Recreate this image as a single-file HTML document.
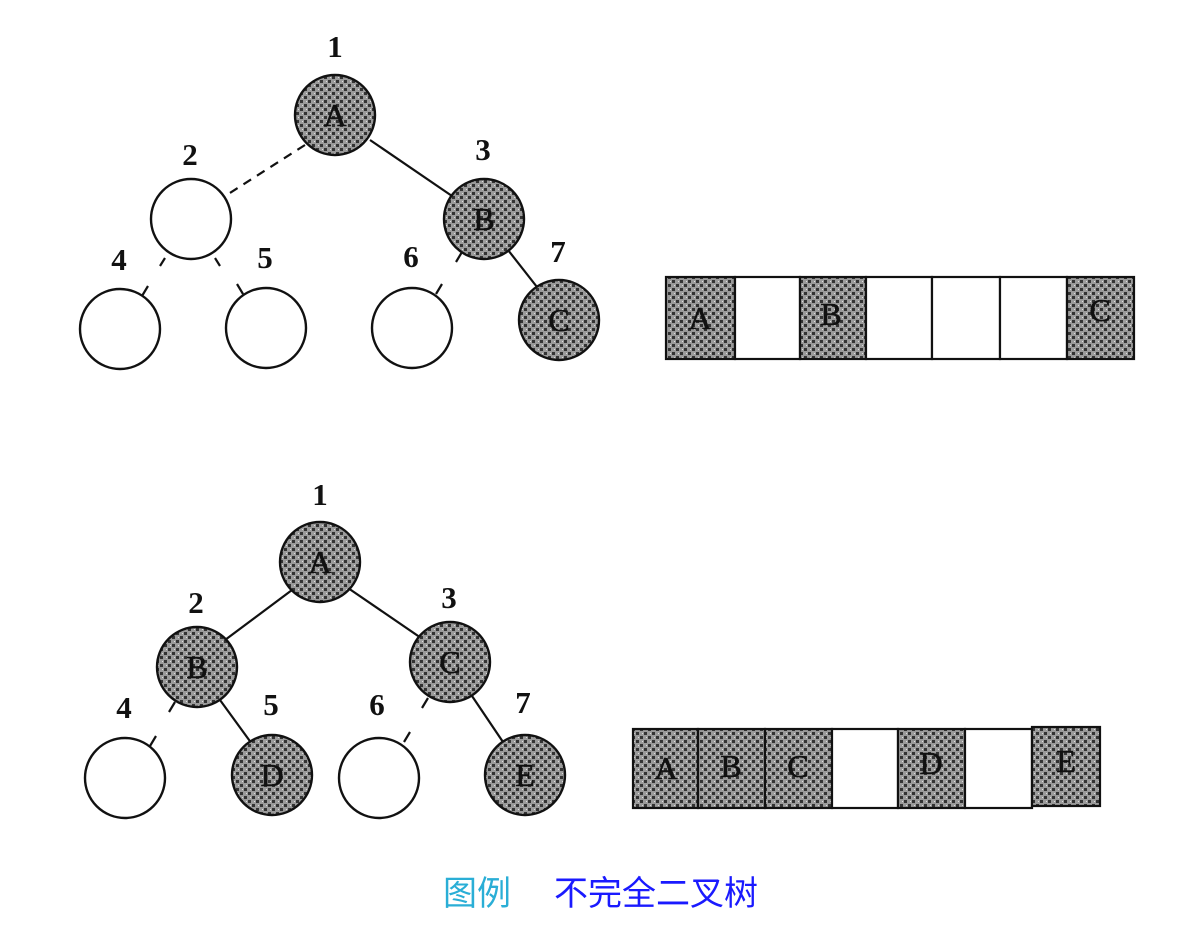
<!DOCTYPE html>
<html><head><meta charset="utf-8">
<style>
html,body{margin:0;padding:0;background:#fff;}
svg{display:block;}
.n{font-family:"Liberation Serif",serif;font-size:31px;font-weight:bold;fill:#111;}
.l{font-family:"Liberation Serif",serif;font-size:32px;fill:#111;text-anchor:middle;stroke:#111;stroke-width:0.6;}
</style></head><body>
<svg width="1198" height="944" viewBox="0 0 1198 944" xmlns="http://www.w3.org/2000/svg">
<defs>
<pattern id="p" width="8" height="8" patternUnits="userSpaceOnUse">
<rect width="8" height="8" fill="#9a9a9a"/>
<rect x="0" y="0" width="3" height="3" fill="#333"/>
<rect x="4" y="4" width="3" height="3" fill="#333"/>
<rect x="2" y="5" width="1" height="1" fill="#ddd"/>
<rect x="6" y="1" width="1" height="1" fill="#ddd"/>
</pattern>
</defs>
<g stroke="#111" stroke-width="2.2" fill="none">
<line x1="305" y1="145" x2="222" y2="198" stroke-dasharray="9,7"/>
<line x1="370" y1="140" x2="452" y2="196"/>
<line x1="165" y1="258" x2="160" y2="266"/>
<line x1="215" y1="258" x2="220" y2="266"/>
<line x1="148" y1="286" x2="142" y2="296"/>
<line x1="237" y1="284" x2="243" y2="294"/>
<line x1="462" y1="252" x2="456" y2="262"/>
<line x1="442" y1="284" x2="436" y2="294"/>
<line x1="508" y1="250" x2="537" y2="287"/>
<line x1="292" y1="590" x2="225" y2="640"/>
<line x1="348" y1="588" x2="424" y2="640"/>
<line x1="175" y1="702" x2="169" y2="712"/>
<line x1="156" y1="736" x2="150" y2="746"/>
<line x1="220" y1="700" x2="252" y2="744"/>
<line x1="428" y1="698" x2="422" y2="708"/>
<line x1="410" y1="732" x2="404" y2="742"/>
<line x1="472" y1="696" x2="503" y2="742"/>
</g>
<g stroke="#111" stroke-width="2.4">
<circle cx="335" cy="115" r="40" fill="url(#p)"/>
<circle cx="191" cy="219" r="40" fill="#fff"/>
<circle cx="484" cy="219" r="40" fill="url(#p)"/>
<circle cx="120" cy="329" r="40" fill="#fff"/>
<circle cx="266" cy="328" r="40" fill="#fff"/>
<circle cx="412" cy="328" r="40" fill="#fff"/>
<circle cx="559" cy="320" r="40" fill="url(#p)"/>
<circle cx="320" cy="562" r="40" fill="url(#p)"/>
<circle cx="197" cy="667" r="40" fill="url(#p)"/>
<circle cx="450" cy="662" r="40" fill="url(#p)"/>
<circle cx="125" cy="778" r="40" fill="#fff"/>
<circle cx="272" cy="775" r="40" fill="url(#p)"/>
<circle cx="379" cy="778" r="40" fill="#fff"/>
<circle cx="525" cy="775" r="40" fill="url(#p)"/>
</g>
<g class="l">
<text x="335" y="126">A</text><text x="484" y="230">B</text><text x="559" y="331">C</text>
<text x="320" y="573">A</text><text x="197" y="678">B</text><text x="450" y="673">C</text>
<text x="272" y="786">D</text><text x="525" y="786">E</text>
</g>
<g class="n" text-anchor="middle">
<text x="335" y="57">1</text><text x="190" y="165">2</text><text x="483" y="160">3</text>
<text x="119" y="270">4</text><text x="265" y="268">5</text><text x="411" y="267">6</text><text x="558" y="262">7</text>
<text x="320" y="505">1</text><text x="196" y="613">2</text><text x="449" y="608">3</text>
<text x="124" y="718">4</text><text x="271" y="715">5</text><text x="377" y="715">6</text><text x="523" y="713">7</text>
</g>
<g stroke="#111" stroke-width="2.2">
<rect x="666" y="277" width="69" height="82" fill="url(#p)"/>
<rect x="735" y="277" width="65" height="82" fill="#fff"/>
<rect x="800" y="277" width="66" height="82" fill="url(#p)"/>
<rect x="866" y="277" width="66" height="82" fill="#fff"/>
<rect x="932" y="277" width="68" height="82" fill="#fff"/>
<rect x="1000" y="277" width="67" height="82" fill="#fff"/>
<rect x="1067" y="277" width="67" height="82" fill="url(#p)"/>
</g>
<g class="l"><text x="700" y="329">A</text><text x="831" y="325">B</text><text x="1100" y="321">C</text></g>
<g stroke="#111" stroke-width="2.2">
<rect x="633" y="729" width="65" height="79" fill="url(#p)"/>
<rect x="698" y="729" width="67" height="79" fill="url(#p)"/>
<rect x="765" y="729" width="67" height="79" fill="url(#p)"/>
<rect x="832" y="729" width="66" height="79" fill="#fff"/>
<rect x="898" y="729" width="67" height="79" fill="url(#p)"/>
<rect x="965" y="729" width="67" height="79" fill="#fff"/>
<rect x="1032" y="727" width="68" height="79" fill="url(#p)"/>
</g>
<g class="l"><text x="666" y="779">A</text><text x="731" y="777">B</text><text x="798" y="777">C</text><text x="931" y="774">D</text><text x="1066" y="772">E</text></g>
<text x="443" y="905" font-family="'Liberation Sans','Noto Sans CJK SC',sans-serif" font-size="34" fill="#2aaed6">图例</text>
<text x="554" y="905" font-family="'Liberation Sans','Noto Sans CJK SC',sans-serif" font-size="34" fill="#1a1aff">不完全二叉树</text>
</svg>
</body></html>
